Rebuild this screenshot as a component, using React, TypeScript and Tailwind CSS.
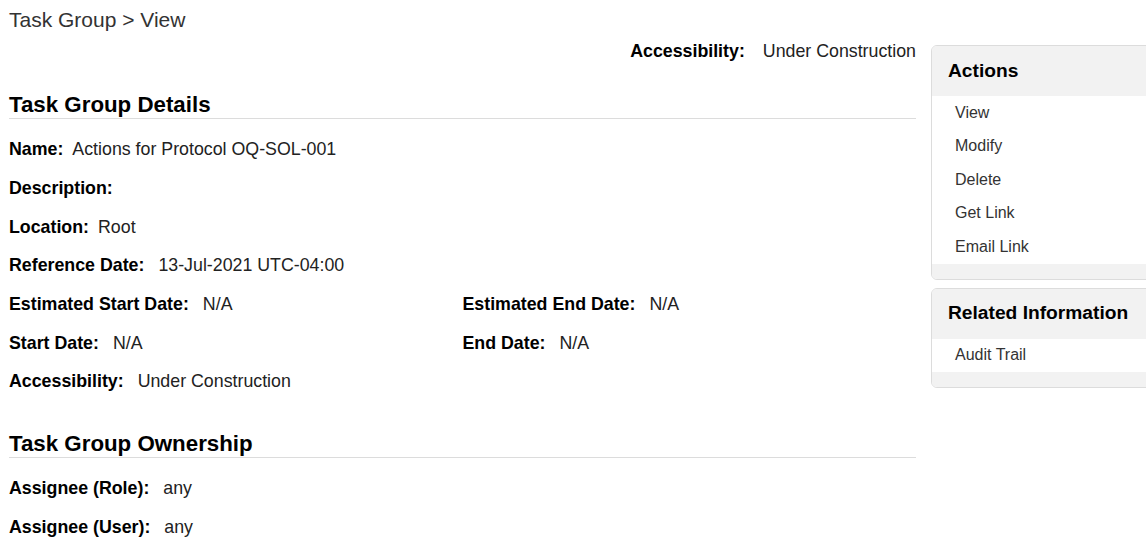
import React from "react";

interface Field {
  label: string;
  value: string;
  gap?: string;
}

function FieldRow({ label, value, gap = "ml-[14px]" }: Field) {
  return (
    <div className="flex h-[38.67px] items-center text-[17.8px] leading-[24px]">
      <span className="font-bold text-black">{label}</span>
      <span className={`${gap} text-[#222]`}>{value}</span>
    </div>
  );
}

function SectionHeading({ title }: { title: string }) {
  return (
    <h2 className="border-b border-[#dcdcdc] text-[22.3px] font-bold leading-[27px] text-black">
      {title}
    </h2>
  );
}

function SidePanel({ title, items }: { title: string; items: string[] }) {
  return (
    <div className="overflow-hidden rounded-[6px] border border-[#dcdcdc] bg-white">
      <div className="flex h-[50px] items-center bg-[#f2f2f2] pl-[16px] text-[19.2px] font-bold text-black">
        {title}
      </div>
      <ul>
        {items.map((item) => (
          <li
            key={item}
            className="flex h-[33.5px] items-center pl-[23px] text-[16px] text-[#333]"
          >
            {item}
          </li>
        ))}
      </ul>
      <div className="h-[15px] bg-[#f2f2f2]" />
    </div>
  );
}

export default function App() {
  return (
    <div
      className="h-[551px] w-[1146px] overflow-hidden bg-white"
      style={{ fontFamily: '"Liberation Sans", Arial, sans-serif' }}
    >
      {/* Breadcrumb */}
      <div className="pl-[9px] pt-[7px] text-[21px] leading-[26px] text-[#333]">
        Task Group &gt; View
      </div>

      <div className="flex">
        {/* Main column */}
        <div className="ml-[9px] w-[907px] shrink-0">
          <div className="mt-[6px] flex h-[24px] items-center justify-end text-[17.8px]">
            <span className="font-bold text-black">Accessibility:</span>
            <span className="ml-[18px] text-[#222]">Under Construction</span>
          </div>

          <div className="mt-[28px]">
            <SectionHeading title="Task Group Details" />
            <div className="pt-[11px]">
              <FieldRow label="Name:" value="Actions for Protocol OQ-SOL-001" gap="ml-[9px]" />
              <FieldRow label="Description:" value="" />
              <FieldRow label="Location:" value="Root" gap="ml-[9px]" />
              <FieldRow label="Reference Date:" value="13-Jul-2021 UTC-04:00" gap="ml-[14px]" />
              <div className="grid grid-cols-2">
                <FieldRow label="Estimated Start Date:" value="N/A" />
                <FieldRow label="Estimated End Date:" value="N/A" />
                <FieldRow label="Start Date:" value="N/A" />
                <FieldRow label="End Date:" value="N/A" />
              </div>
              <FieldRow label="Accessibility:" value="Under Construction" />
            </div>
          </div>

          <div className="mt-[29px]">
            <SectionHeading title="Task Group Ownership" />
            <div className="pt-[11px]">
              <FieldRow label="Assignee (Role):" value="any" />
              <FieldRow label="Assignee (User):" value="any" />
            </div>
          </div>
        </div>

        {/* Sidebar */}
        <div className="ml-[15px] mt-[12px] flex w-[260px] shrink-0 flex-col gap-[8px]">
          <SidePanel
            title="Actions"
            items={["View", "Modify", "Delete", "Get Link", "Email Link"]}
          />
          <SidePanel title="Related Information" items={["Audit Trail"]} />
        </div>
      </div>
    </div>
  );
}
